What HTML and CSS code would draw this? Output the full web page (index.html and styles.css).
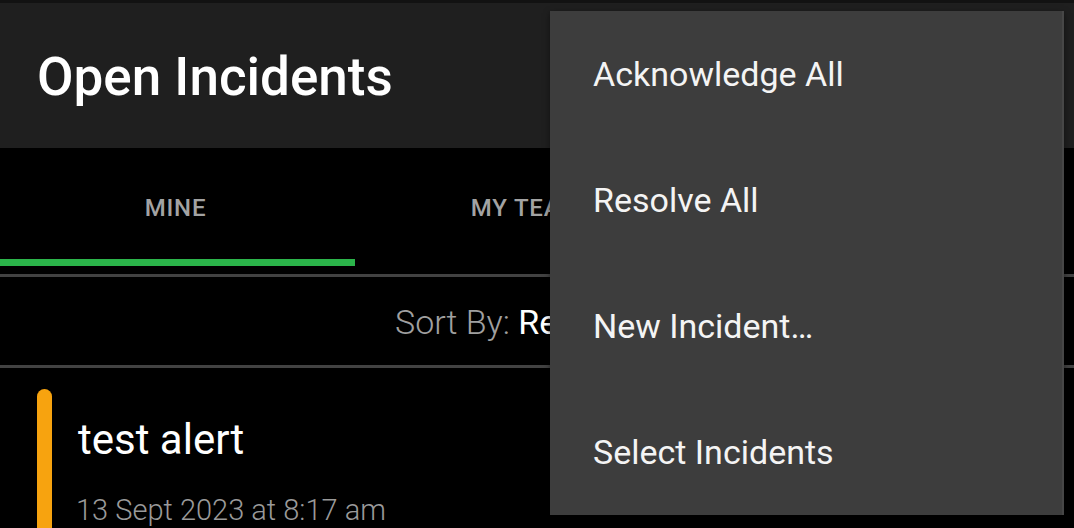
FILE: index.html
```html
<!DOCTYPE html>
<html lang="en">
<head>
<meta charset="utf-8">
<title>Open Incidents</title>
<link rel="stylesheet" href="styles.css">
</head>
<body>
<div class="screen">
  <div class="statusbar"></div>
  <header class="appbar">
    <h1 class="title">Open Incidents</h1>
  </header>
  <nav class="tabs">
    <div class="tab active"><span class="tab-label">MINE</span><span class="indicator"></span></div>
    <div class="tab"><span class="tab-label">MY TEAM</span><span class="indicator"></span></div>
    <div class="tab"><span class="tab-label">ALL</span><span class="indicator"></span></div>
  </nav>
  <div class="sortbar">
    <span class="sort-key">Sort By:</span>&nbsp;<span class="sort-value">Recent</span>
    <svg class="sort-caret" width="34" height="34" viewBox="0 0 24 24" aria-hidden="true"><path d="M7 10l5 5 5-5z" fill="#fff"/></svg>
  </div>
  <div class="incident">
    <div class="urgency"></div>
    <div class="incident-body">
      <div class="incident-title">test alert</div>
      <div class="incident-date">13 Sept 2023 at 8:17 am</div>
    </div>
  </div>

  <ul class="menu">
    <li class="menu-item">Acknowledge All</li>
    <li class="menu-item">Resolve All</li>
    <li class="menu-item">New Incident…</li>
    <li class="menu-item">Select Incidents</li>
  </ul>
</div>
</body>
</html>
```

FILE: styles.css
```css
html, body {
  margin: 0;
  padding: 0;
  background: #000;
}

.screen {
  position: relative;
  width: 1074px;
  height: 528px;
  overflow: hidden;
  font-family: Roboto, "Liberation Sans", sans-serif;
  color: #fff;
}

.statusbar {
  height: 3px;
  background: #121212;
}

.appbar {
  height: 145px;
  background: #1f1f1f;
  display: flex;
  align-items: center;
  padding-left: 37px;
}

.title {
  margin: 0;
  font-size: 53px;
  font-weight: 500;
  line-height: 1;
  padding-top: 4px;
}

.tabs {
  display: flex;
  height: 126px;
  padding-right: 21px;
  border-bottom: 3px solid #424242;
}

.tab {
  flex: 1;
  display: flex;
  flex-direction: column;
  align-items: center;
}

.tab-label {
  margin-top: 48px;
  font-size: 24px;
  font-weight: 500;
  letter-spacing: 0.8px;
  color: #a3a3a3;
  line-height: 24px;
  flex: 1;
}

.indicator {
  align-self: stretch;
  height: 7px;
  margin-right: -4px;
  margin-bottom: 8px;
}

.tab.active .indicator {
  background: #2bb44a;
}

.sortbar {
  height: 91px;
  box-sizing: border-box;
  border-bottom: 3px solid #424242;
  display: flex;
  align-items: center;
  justify-content: center;
  font-size: 34px;
  font-weight: 300;
  padding-top: 2px;
}

.sort-key {
  color: #a0a0a0;
}

.sort-value {
  color: #fff;
  font-weight: 400;
}

.sort-caret {
  margin-left: 22px;
}

.incident {
  display: flex;
  padding-left: 37px;
  padding-top: 21px;
}

.urgency {
  width: 15px;
  height: 200px;
  border-radius: 8px 8px 0 0;
  background: #f7a30f;
}

.incident-body {
  padding-left: 26px;
}

.incident-title {
  font-size: 42px;
  line-height: 42px;
  margin-top: 30px;
}

.incident-date {
  font-size: 29px;
  color: #9a9a9a;
  margin-top: 32px;
  margin-left: -2px;
  font-weight: 300;
}

.menu {
  position: absolute;
  left: 550px;
  top: 11px;
  width: 514px;
  margin: 0;
  padding: 0;
  list-style: none;
  background: #3d3d3d;
  border-right: 2px solid #474747;
  box-sizing: border-box;
  box-shadow: 0 2px 6px rgba(0, 0, 0, 0.5);
}

.menu-item {
  height: 126px;
  display: flex;
  align-items: center;
  padding-left: 43px;
  font-size: 34px;
  color: #f4f4f4;
}
```
